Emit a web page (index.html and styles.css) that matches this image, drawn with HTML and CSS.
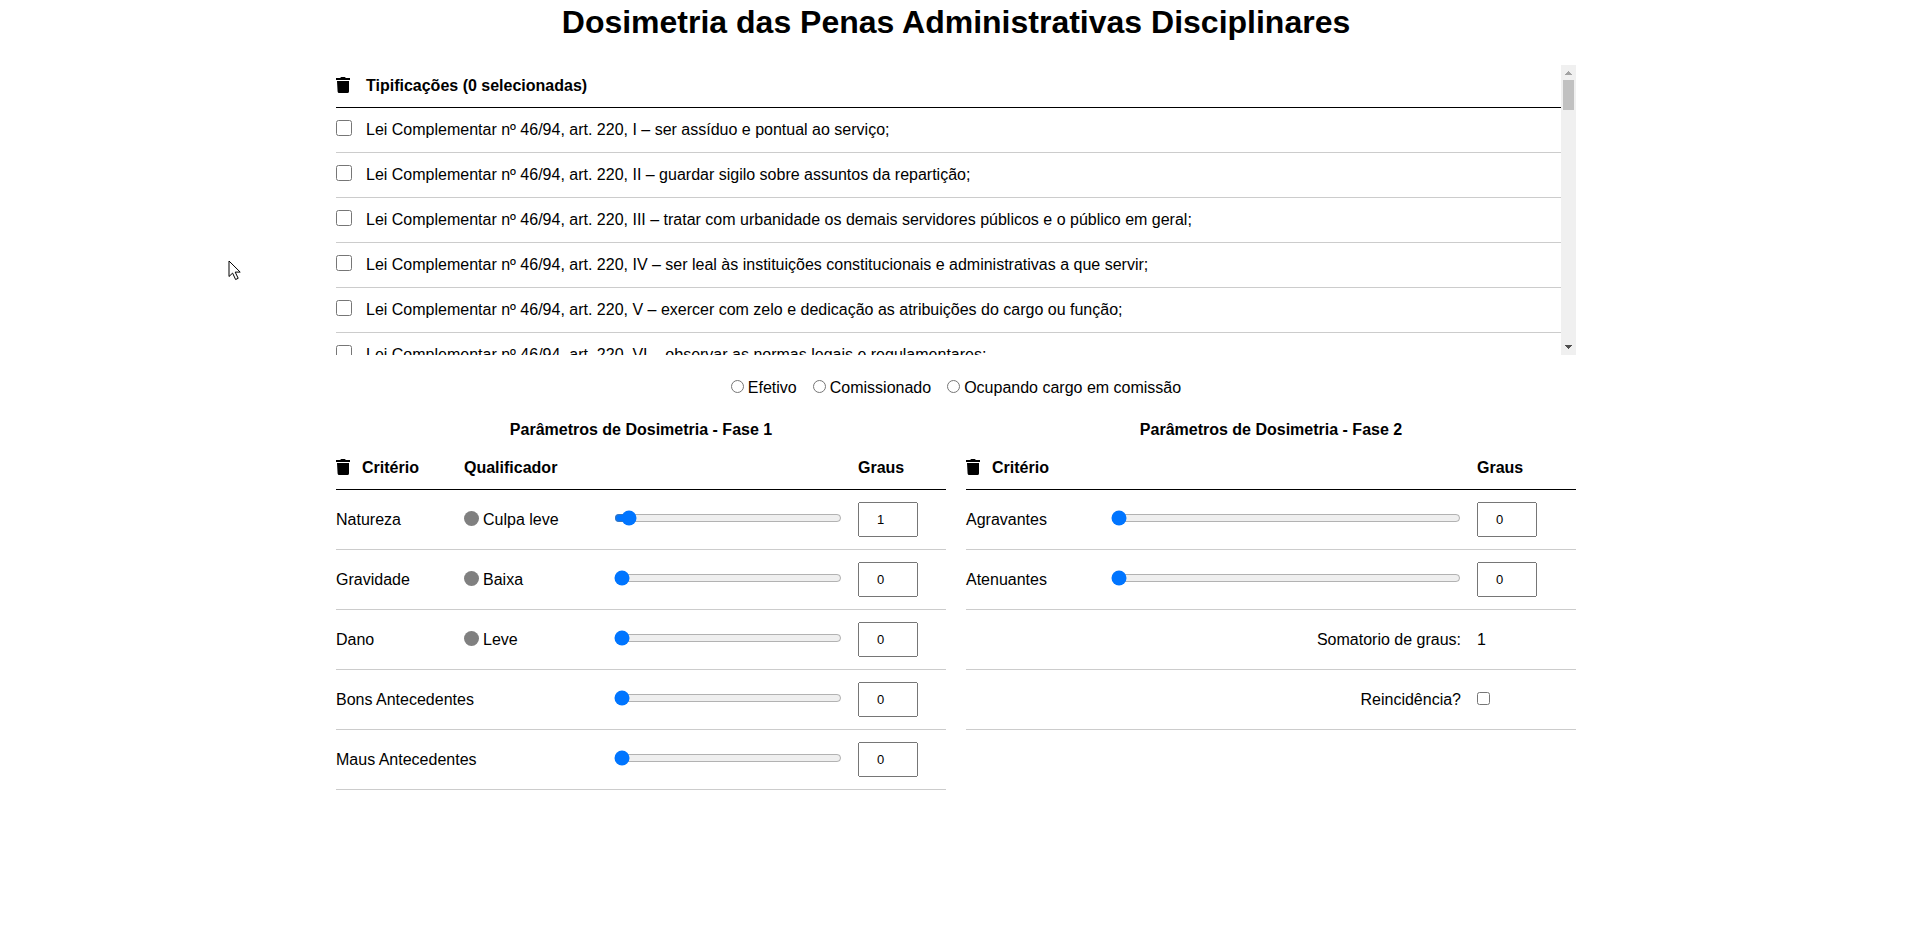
FILE: index.html
```html
<!DOCTYPE html>
<html lang="pt-BR">
<head>
<meta charset="utf-8">
<title>Dosimetria das Penas Administrativas Disciplinares</title>
<link rel="stylesheet" href="styles.css">
</head>
<body>
<svg class="symbols" aria-hidden="true">
  <symbol id="trash" viewBox="0 0 14 16">
    <path d="M0 1h4.200L4.800.3Q5 0 5.400 0h3.200q.4 0 .6.300L9.800 1H14v2H0zM1 4h12v10.500q-.1 1.500-1.500 1.500H3.100q-1.400 0-1.500-1.500z"/>
  </symbol>
</svg>
<main class="page">
  <h1 class="title">Dosimetria das Penas Administrativas Disciplinares</h1>

  <section class="offences">
    <div class="offences-view">
      <table class="grid offence-table">
        <colgroup><col class="col-check"><col></colgroup>
        <thead>
          <tr>
            <th><button class="trash" type="button" aria-label="Limpar tipificações"><svg><use href="#trash"/></svg></button></th>
            <th>Tipificações (0 selecionadas)</th>
          </tr>
        </thead>
        <tbody>
          <tr><td><input class="pick" type="checkbox" id="t1"></td><td><label for="t1">Lei Complementar nº 46/94, art. 220, I – ser assíduo e pontual ao serviço;</label></td></tr>
          <tr><td><input class="pick" type="checkbox" id="t2"></td><td><label for="t2">Lei Complementar nº 46/94, art. 220, II – guardar sigilo sobre assuntos da repartição;</label></td></tr>
          <tr><td><input class="pick" type="checkbox" id="t3"></td><td><label for="t3">Lei Complementar nº 46/94, art. 220, III – tratar com urbanidade os demais servidores públicos e o público em geral;</label></td></tr>
          <tr><td><input class="pick" type="checkbox" id="t4"></td><td><label for="t4">Lei Complementar nº 46/94, art. 220, IV – ser leal às instituições constitucionais e administrativas a que servir;</label></td></tr>
          <tr><td><input class="pick" type="checkbox" id="t5"></td><td><label for="t5">Lei Complementar nº 46/94, art. 220, V – exercer com zelo e dedicação as atribuições do cargo ou função;</label></td></tr>
          <tr><td><input class="pick" type="checkbox" id="t6"></td><td><label for="t6">Lei Complementar nº 46/94, art. 220, VI – observar as normas legais e regulamentares;</label></td></tr>
        </tbody>
      </table>
    </div>
    <div class="scrollbar" aria-hidden="true">
      <svg class="arrow arrow-up" viewBox="0 0 15 15" shape-rendering="crispEdges"><path d="M7 6h1v1h1v1h1v1h1v1H4V9h1V8h1V7h1z"/></svg>
      <div class="thumb"></div>
      <svg class="arrow arrow-down" viewBox="0 0 15 15" shape-rendering="crispEdges"><path d="M4 5h7v1h-1v1H9v1H8v1H7V8H6V7H5V6H4z"/></svg>
    </div>
  </section>

  <div class="roles">
    <label class="role"><input type="radio" name="role">Efetivo</label>
    <label class="role"><input type="radio" name="role">Comissionado</label>
    <label class="role"><input type="radio" name="role">Ocupando cargo em comissão</label>
  </div>

  <div class="phases">
    <section class="phase">
      <h2 class="phase-title">Parâmetros de Dosimetria - Fase 1</h2>
      <table class="grid phase-table">
        <colgroup><col class="col-criterion"><col class="col-qualifier"><col><col class="col-degree"></colgroup>
        <thead>
          <tr>
            <th><div class="head"><button class="trash" type="button" aria-label="Limpar fase 1"><svg><use href="#trash"/></svg></button>Critério</div></th>
            <th>Qualificador</th><th></th><th>Graus</th>
          </tr>
        </thead>
        <tbody>
          <tr><td><label for="n1">Natureza</label></td><td><div class="level"><span class="dot"></span>Culpa leve</div></td><td class="slide"><input type="range" min="0" max="30" value="1" aria-label="Natureza"></td><td><input class="degree" id="n1" type="number" value="1"></td></tr>
          <tr><td><label for="n2">Gravidade</label></td><td><div class="level"><span class="dot"></span>Baixa</div></td><td class="slide"><input type="range" min="0" max="30" value="0" aria-label="Gravidade"></td><td><input class="degree" id="n2" type="number" value="0"></td></tr>
          <tr><td><label for="n3">Dano</label></td><td><div class="level"><span class="dot"></span>Leve</div></td><td class="slide"><input type="range" min="0" max="30" value="0" aria-label="Dano"></td><td><input class="degree" id="n3" type="number" value="0"></td></tr>
          <tr><td colspan="2"><label for="n4">Bons Antecedentes</label></td><td class="slide"><input type="range" min="0" max="30" value="0" aria-label="Bons Antecedentes"></td><td><input class="degree" id="n4" type="number" value="0"></td></tr>
          <tr><td colspan="2"><label for="n5">Maus Antecedentes</label></td><td class="slide"><input type="range" min="0" max="30" value="0" aria-label="Maus Antecedentes"></td><td><input class="degree" id="n5" type="number" value="0"></td></tr>
        </tbody>
      </table>
    </section>

    <section class="phase">
      <h2 class="phase-title">Parâmetros de Dosimetria - Fase 2</h2>
      <table class="grid phase-table">
        <colgroup><col class="col-criterion-wide"><col><col class="col-degree-wide"></colgroup>
        <thead>
          <tr>
            <th><div class="head"><button class="trash" type="button" aria-label="Limpar fase 2"><svg><use href="#trash"/></svg></button>Critério</div></th>
            <th></th><th>Graus</th>
          </tr>
        </thead>
        <tbody>
          <tr><td><label for="m1">Agravantes</label></td><td class="slide"><input type="range" min="0" max="30" value="0" aria-label="Agravantes"></td><td><input class="degree" id="m1" type="number" value="0"></td></tr>
          <tr><td><label for="m2">Atenuantes</label></td><td class="slide"><input type="range" min="0" max="30" value="0" aria-label="Atenuantes"></td><td><input class="degree" id="m2" type="number" value="0"></td></tr>
          <tr><td class="summary" colspan="2">Somatorio de graus:</td><td>1</td></tr>
          <tr><td class="summary" colspan="2"><label for="repeat">Reincidência?</label></td><td><input class="repeat" id="repeat" type="checkbox"></td></tr>
        </tbody>
      </table>
    </section>
  </div>
</main>
<svg class="pointer" viewBox="0 0 14 21" aria-hidden="true"><path d="M1 1v15.500l3.600-3.400 3 6.400 2.600-1.200-3-6.200h5z"/></svg>
</body>
</html>
```
FILE: styles.css
```css
* {
  box-sizing: border-box;
}

body {
  margin: 0;
  padding: 4px 3px 0 0;
  background: #fff;
  color: #000;
  font: 16px/18px "Liberation Sans", Arial, sans-serif;
}

.symbols {
  display: none;
}

.page {
  max-width: 1240px;
  margin: 0 auto;
}

.title {
  margin: 0 0 25px;
  font-size: 32px;
  line-height: 36px;
  text-align: center;
}

.grid {
  width: 100%;
  table-layout: fixed;
  border-collapse: separate;
  border-spacing: 0;
}

.grid th,
.grid td {
  padding: 0;
  border-bottom: 1px solid #ccc;
  text-align: left;
  vertical-align: middle;
}

.grid th {
  border-bottom-color: #000;
}

.trash {
  display: block;
  width: 14px;
  height: 16px;
  margin: 0 0 2px;
  padding: 0;
  border: 0;
  background: none;
  color: #000;
}

.trash svg {
  display: block;
  width: 14px;
  height: 16px;
  fill: currentColor;
}

.offences {
  display: flex;
  height: 290px;
}

.offences-view {
  flex: 1;
  overflow-y: auto;
  scrollbar-width: none;
}

.scrollbar {
  display: flex;
  flex-direction: column;
  width: 15px;
  background: #f0f0f0;
}

.arrow {
  width: 15px;
  height: 15px;
}

.arrow-up {
  fill: #a3a3a3;
}

.arrow-down {
  margin-top: auto;
  fill: #505050;
}

.thumb {
  height: 30px;
  margin: 0 2px;
  background: #c1c1c1;
}

.offence-table th {
  height: 43px;
}

.offence-table td {
  height: 45px;
}

.col-check {
  width: 30px;
}

.pick {
  display: block;
  width: 16px;
  height: 16px;
  margin: 0 0 4px;
}

.roles {
  display: flex;
  justify-content: center;
  gap: 16px;
  margin: 24px 0;
}

.role {
  display: flex;
  gap: 4px;
}

.role input {
  width: 13px;
  height: 13px;
  margin: 1px 0 0;
}

.phases {
  display: grid;
  grid-template-columns: 1fr 1fr;
  gap: 20px;
}

.phase-title {
  margin: 0 0 8px;
  font-size: 16px;
  line-height: 18px;
  text-align: center;
}

.phase-table th {
  height: 43px;
}

.phase-table td {
  height: 60px;
}

.head {
  display: flex;
  gap: 12px;
}

.col-criterion {
  width: 128px;
}

.col-qualifier {
  width: 150px;
}

.col-degree {
  width: 88px;
}

.col-criterion-wide {
  width: 145px;
}

.col-degree-wide {
  width: 99px;
}

.level {
  display: flex;
  gap: 4px;
}

.dot {
  width: 15px;
  height: 15px;
  border-radius: 50%;
  background: #808080;
}

.grid .slide {
  padding: 0 16px 4px 0;
}

.slide input {
  display: block;
  width: 100%;
  height: 16px;
  margin: 0;
}

.degree {
  display: block;
  width: 60px;
  height: 35px;
  font: 13px "Liberation Sans", Arial, sans-serif;
  text-align: center;
}

.grid .summary {
  padding-right: 16px;
  text-align: right;
}

.repeat {
  display: block;
  width: 13px;
  height: 13px;
  margin: 0 0 2px;
}

.pointer {
  position: absolute;
  top: 260px;
  left: 228px;
  width: 14px;
  height: 21px;
  fill: #fff;
  stroke: #000;
  stroke-width: 1;
  pointer-events: none;
}
```
